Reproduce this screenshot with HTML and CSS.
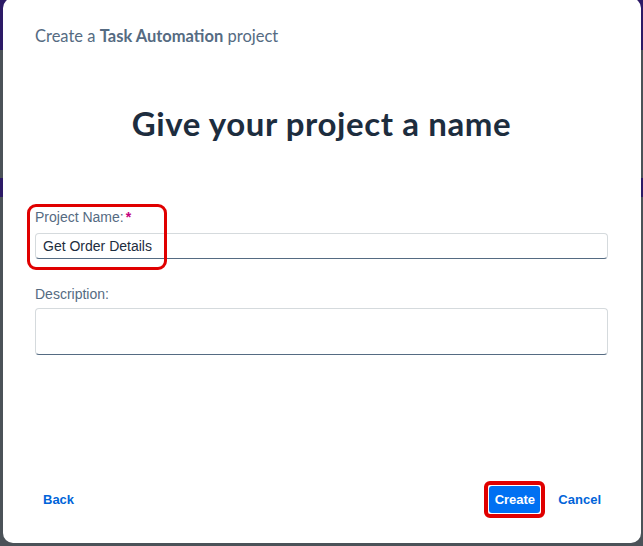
FILE: index.html
```html
<!DOCTYPE html>
<html>
<head>
<meta charset="utf-8">
<link rel="stylesheet" href="styles.css">
</head>
<body>
<div class="dialog">
  <div class="header">Create a <b>Task Automation</b> project</div>
  <h1 class="title">Give your project a name</h1>
  <div class="field field-name">
    <label class="label">Project Name:<span class="req">*</span></label>
    <div class="input">Get Order Details</div>
    <div class="highlight highlight-name"></div>
  </div>
  <div class="field field-desc">
    <label class="label label-desc">Description:</label>
    <div class="textarea"></div>
  </div>
  <div class="footer">
    <button class="btn btn-link back">Back</button>
    <div class="actions">
      <span class="create-wrap"><button class="btn btn-primary">Create</button></span>
      <button class="btn btn-link cancel">Cancel</button>
    </div>
  </div>
</div>
</body>
</html>
```
FILE: styles.css
```css
html, body {
  margin: 0;
  padding: 0;
  width: 643px;
  height: 546px;
  overflow: hidden;
}
body {
  background:
    linear-gradient(to bottom,
      #2c1a66 0, #2c1a66 50px,
      #4b5258 50px, #4b5258 178px,
      #2c1a66 178px, #2c1a66 197px,
      #4b5258 197px, #4b5258 100%);
  font-family: "Liberation Sans", Arial, sans-serif;
}
.dialog {
  position: relative;
  box-sizing: border-box;
  margin: -2px 2px 0 3px;
  width: 638px;
  height: 545px;
  background: #ffffff;
  border-radius: 10px;
  padding: 0 33px 0 32px;
  display: flex;
  flex-direction: column;
}
.header {
  margin-top: 28px;
  font-family: "Lato", "Liberation Sans", sans-serif;
  font-size: 16.5px;
  color: #556b82;
  line-height: 20px;
}
.header b {
  font-weight: 700;
}
.title {
  margin: 57px 0 0 0;
  text-align: center;
  font-family: "Lato", "Liberation Sans", sans-serif;
  font-weight: 700;
  font-size: 33px;
  line-height: 40px;
  color: #1d2d3e;
  letter-spacing: 0.6px;
}
.field {
  position: relative;
}
.field-name {
  margin-top: 65px;
}
.field-desc {
  margin-top: 26px;
}
.label {
  display: block;
  font-size: 14px;
  line-height: 18px;
  color: #556b82;
  margin-bottom: 7px;
}
.label-desc {
  margin-bottom: 5px;
}
.req {
  color: #c4007e;
  font-weight: 700;
  margin-left: 2px;
}
.input {
  box-sizing: border-box;
  height: 26px;
  border: 1px solid #d5dadd;
  border-bottom-color: #556b82;
  border-radius: 4px;
  padding: 0 7px;
  font-size: 14px;
  line-height: 24px;
  color: #1d2d3e;
}
.textarea {
  box-sizing: border-box;
  height: 47px;
  border: 1px solid #d5dadd;
  border-bottom-color: #556b82;
  border-radius: 4px;
}
.highlight {
  position: absolute;
  border: 3px solid #e00000;
  border-radius: 9px;
  box-sizing: border-box;
}
.highlight-name {
  left: -8px;
  top: -4px;
  width: 140px;
  height: 66px;
}
.footer {
  margin-top: auto;
  margin-bottom: 25px;
  display: flex;
  justify-content: space-between;
  align-items: center;
}
.actions {
  display: flex;
  align-items: center;
  gap: 6px;
}
.btn {
  font-family: "Liberation Sans", Arial, sans-serif;
  font-size: 13px;
  font-weight: 700;
  border: none;
  background: none;
  padding: 0 8px;
  height: 27px;
  line-height: 27px;
  border-radius: 4px;
  cursor: pointer;
}
.btn-link {
  color: #0064d9;
}
.back {
  margin-left: 0;
}
.cancel {
  padding: 0 7px;
}
.create-wrap {
  display: inline-flex;
  border: 4px solid #e00000;
  border-radius: 6px;
  padding: 1px;
}
.btn-primary {
  background: #0070f2;
  color: #ffffff;
  border-radius: 3px;
  padding: 0 4px;
  width: 51px;
  height: 27px;
  line-height: 27px;
}
```
